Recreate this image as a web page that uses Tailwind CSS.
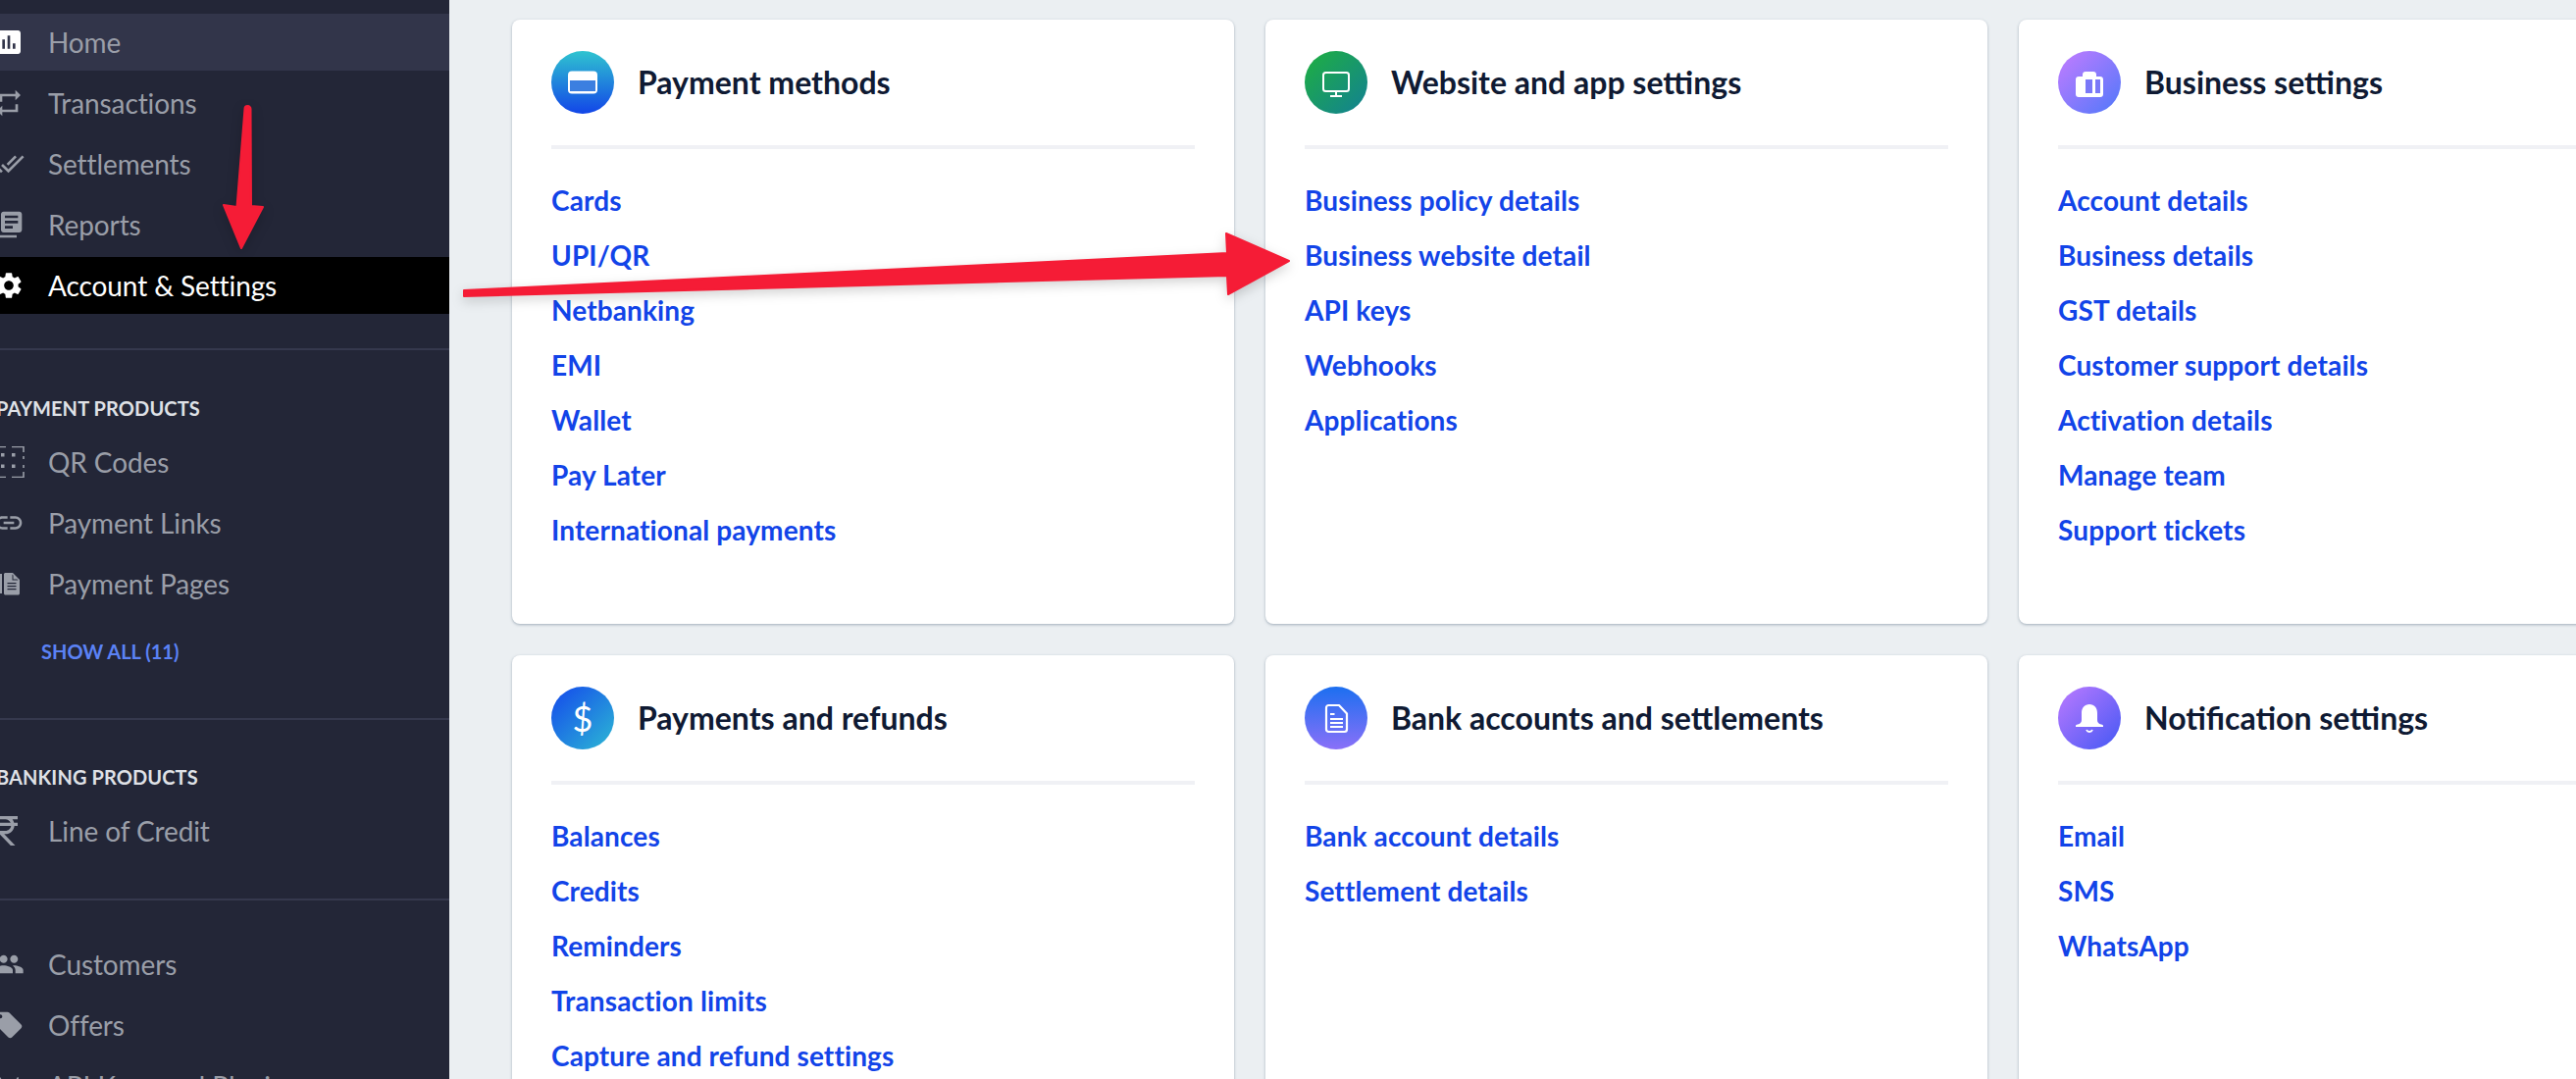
<!DOCTYPE html>
<html lang="en">
<head>
  <meta charset="UTF-8" />
  <title>Account & Settings</title>
  <script src="https://cdn.jsdelivr.net/npm/@tailwindcss/browser@4"></script>
</head>
<body class="h-[1100px] w-[2626px] overflow-hidden bg-[#ebeff2] font-['Lato',sans-serif]">
<div class="relative flex h-[1100px] w-[2626px] overflow-hidden">

  <!-- Sidebar -->
  <aside class="h-[1100px] w-[458px] shrink-0 overflow-hidden bg-[#232637] pt-[14px] text-[28px] tracking-[-0.1px] text-[#9a9ea8]">
    <nav class="flex flex-col gap-1">
      <a class="flex h-[58px] items-center bg-[#32354a]">
        <span class="w-[49px] shrink-0"><svg class="-ml-[7px] h-8 w-8 fill-white" viewBox="0 0 24 24"><path d="M19 3H5c-1.1 0-2 .9-2 2v14c0 1.1.9 2 2 2h14c1.1 0 2-.9 2-2V5c0-1.1-.9-2-2-2zM9 17H7v-7h2v7zm4 0h-2V7h2v10zm4 0h-2v-4h2v4z"/></svg></span>
        Home
      </a>
      <a class="flex h-[58px] items-center">
        <span class="w-[49px] shrink-0"><svg class="-ml-[7px] h-8 w-8 fill-[#9a9ea8]" viewBox="0 0 24 24"><path d="M7 7h10v3l4-4-4-4v3H5v6h2V7zm10 10H7v-3l-4 4 4 4v-3h12v-6h-2v4z"/></svg></span>
        Transactions
      </a>
      <a class="flex h-[58px] items-center">
        <span class="w-[49px] shrink-0"><svg class="-ml-[7px] h-8 w-8 fill-[#9a9ea8]" viewBox="0 0 24 24"><path d="M18 7l-1.41-1.41-6.34 6.34 1.41 1.41L18 7zm4.24-1.41L11.66 16.17 7.48 12l-1.41 1.41L11.66 19l12-12-1.42-1.41zM.41 13.41L6 19l1.41-1.41L1.83 12 .41 13.41z"/></svg></span>
        Settlements
      </a>
      <a class="flex h-[58px] items-center">
        <span class="w-[49px] shrink-0"><svg class="-ml-[7px] h-8 w-8 fill-[#9a9ea8]" viewBox="0 0 24 24"><path d="M4 6H2v14c0 1.1.9 2 2 2h14v-2H4V6zm16-4H8c-1.1 0-2 .9-2 2v12c0 1.1.9 2 2 2h12c1.1 0 2-.9 2-2V4c0-1.1-.9-2-2-2zm-1 9H9V9h10v2zm-4 4H9v-2h6v2zm4-8H9V5h10v2z"/></svg></span>
        Reports
      </a>
      <a class="flex h-[58px] items-center bg-black text-white">
        <span class="w-[49px] shrink-0"><svg class="-ml-[7px] h-8 w-8 fill-white" viewBox="0 0 24 24"><path d="M19.14 12.94c.04-.3.06-.61.06-.94 0-.32-.02-.64-.07-.94l2.03-1.58c.18-.14.23-.41.12-.61l-1.92-3.32c-.12-.22-.37-.29-.59-.22l-2.39.96c-.5-.38-1.03-.7-1.62-.94l-.36-2.54c-.04-.24-.24-.41-.48-.41h-3.84c-.24 0-.43.17-.47.41l-.36 2.54c-.59.24-1.13.57-1.62.94l-2.39-.96c-.22-.08-.47 0-.59.22L2.74 8.87c-.12.21-.08.47.12.61l2.03 1.58c-.05.3-.09.63-.09.94s.02.64.07.94l-2.03 1.58c-.18.14-.23.41-.12.61l1.92 3.32c.12.22.37.29.59.22l2.39-.96c.5.38 1.03.7 1.62.94l.36 2.54c.05.24.24.41.48.41h3.84c.24 0 .44-.17.47-.41l.36-2.54c.59-.24 1.13-.56 1.62-.94l2.39.96c.22.08.47 0 .59-.22l1.92-3.32c.12-.22.07-.47-.12-.61l-2.01-1.58zM12 15.6c-1.98 0-3.6-1.62-3.6-3.6s1.62-3.6 3.6-3.6 3.6 1.62 3.6 3.6-1.62 3.6-3.6 3.6z"/></svg></span>
        Account &amp; Settings
      </a>
    </nav>

    <div class="mt-[35px] h-[2px] bg-[#35384d]"></div>

    <h3 class="mt-[47px] -ml-[4px] h-6 whitespace-nowrap text-[20px] leading-6 font-bold tracking-[0.1px] text-[#dfe1e6]">PAYMENT PRODUCTS</h3>
    <nav class="mt-[14px] flex flex-col gap-1">
      <a class="flex h-[58px] items-center">
        <span class="w-[49px] shrink-0"><svg class="-ml-[7px] h-8 w-8" viewBox="0 0 32 32" fill="none"><path d="M31 6V0.5H19M31 26V31.5H19M13 0.5H0M13 31.5H0M31 10v3M31 19v3" stroke="#9a9ea8" stroke-width="1.6"/><path fill="#9a9ea8" d="M8 7h3.5v3.5H8zM19 7h3.5v3.5H19zM8 18.5h3.5v3.5H8zM19 18.5h3.5v3.5H19z"/></svg></span>
        QR Codes
      </a>
      <a class="flex h-[58px] items-center">
        <span class="w-[49px] shrink-0"><svg class="-ml-[7px] h-8 w-8 fill-[#9a9ea8]" viewBox="0 0 24 24"><path d="M3.9 12c0-1.71 1.39-3.1 3.1-3.1h4V7H7c-2.76 0-5 2.24-5 5s2.24 5 5 5h4v-1.9H7c-1.71 0-3.1-1.39-3.1-3.1zM8 13h8v-2H8v2zm9-6h-4v1.9h4c1.71 0 3.1 1.39 3.1 3.1s-1.39 3.1-3.1 3.1h-4V17h4c2.76 0 5-2.24 5-5s-2.24-5-5-5z"/></svg></span>
        Payment Links
      </a>
      <a class="flex h-[58px] items-center">
        <span class="w-[49px] shrink-0"><svg class="-ml-[7px] h-8 w-8" viewBox="0 0 32 32"><path fill="#9a9ea8" d="M7 6h2v20H7zM11 6.5c0-1 .8-1.5 1.5-1.5H20l7 7v14c0 .8-.7 1.5-1.5 1.5h-13c-.8 0-1.5-.7-1.5-1.5z"/><path fill="#232637" d="M14.5 15h9v1.3h-9zM14.5 18h9v1.3h-9zM14.5 21h9v1.3h-9zM19.5 6.5v6h6l-1-1h-4v-4z"/></svg></span>
        Payment Pages
      </a>
    </nav>
    <a class="mt-[28px] ml-[42px] block h-6 text-[20px] leading-6 font-bold tracking-normal text-[#5b82f5]">SHOW ALL (11)</a>

    <div class="mt-[56px] h-[2px] bg-[#35384d]"></div>

    <h3 class="mt-[46px] -ml-[4px] h-6 whitespace-nowrap text-[20px] leading-6 font-bold tracking-[0.1px] text-[#dfe1e6]">BANKING PRODUCTS</h3>
    <a class="mt-[14px] flex h-[58px] items-center">
      <span class="w-[49px] shrink-0"><svg class="-ml-[12px] h-10 w-10 fill-[#9a9ea8]" viewBox="0 0 24 24"><path d="M13.66 7c-.56-1.18-1.76-2-3.16-2H6V3h12v2h-3.26c.48.58.84 1.26 1.05 2H18v2h-2.02c-.25 2.8-2.61 5-5.48 5h-.73l6.73 7h-2.77L7 14v-2h3.5c1.76 0 3.22-1.3 3.46-3H6V7h7.66z"/></svg></span>
      Line of Credit
    </a>

    <div class="mt-[40px] h-[2px] bg-[#35384d]"></div>

    <nav class="mt-[36px] flex flex-col gap-1">
      <a class="flex h-[58px] items-center">
        <span class="w-[49px] shrink-0"><svg class="-ml-[7px] h-8 w-8 fill-[#9a9ea8]" viewBox="0 0 24 24"><path d="M16 11c1.66 0 2.99-1.34 2.99-3S17.66 5 16 5c-1.66 0-3 1.34-3 3s1.34 3 3 3zm-8 0c1.66 0 2.99-1.34 2.99-3S9.66 5 8 5C6.34 5 5 6.34 5 8s1.34 3 3 3zm0 2c-2.33 0-7 1.17-7 3.5V19h14v-2.5c0-2.33-4.67-3.5-7-3.5zm8 0c-.29 0-.62.02-.97.05 1.16.84 1.97 1.97 1.97 3.45V19h6v-2.5c0-2.33-4.67-3.5-7-3.5z"/></svg></span>
        Customers
      </a>
      <a class="flex h-[58px] items-center">
        <span class="w-[49px] shrink-0"><svg class="-ml-[7px] h-8 w-8 fill-[#9a9ea8]" viewBox="0 0 24 24"><path d="M21.41 11.58l-9-9C12.05 2.22 11.55 2 11 2H4c-1.1 0-2 .9-2 2v7c0 .55.22 1.05.59 1.42l9 9c.36.36.86.58 1.41.58.55 0 1.05-.22 1.41-.59l7-7c.37-.36.59-.86.59-1.41 0-.55-.23-1.06-.59-1.42zM5.5 7C4.67 7 4 6.33 4 5.5S4.67 4 5.5 4 7 4.67 7 5.5 6.33 7 5.5 7z"/></svg></span>
        Offers
      </a>
      <a class="flex h-[58px] items-center">
        <span class="w-[49px] shrink-0"><svg class="-ml-[7px] h-8 w-8 fill-[#9a9ea8]" viewBox="0 0 24 24"><path d="M17.6 9.48l1.84-3.18c.16-.31.04-.69-.26-.85-.29-.15-.65-.06-.83.22l-1.88 3.24c-2.86-1.21-6.08-1.21-8.94 0L5.65 5.67c-.19-.29-.58-.38-.87-.2-.28.18-.37.54-.22.83L6.4 9.48C3.3 11.25 1.28 14.44 1 18h22c-.28-3.56-2.3-6.75-5.4-8.52z"/></svg></span>
        API Keys and Plugins
      </a>
    </nav>
  </aside>

  <!-- Settings cards -->
  <main class="grid shrink-0 grid-cols-[repeat(3,736px)] grid-rows-[616px_616px] gap-8 pt-5 pl-16">

    <section class="rounded-lg bg-white px-10 pt-8 shadow-[0_1px_3px_rgba(100,120,140,0.55)]">
      <div class="flex items-center gap-6 border-b-4 border-[#f0f1f5] pb-8">
        <span class="flex h-16 w-16 items-center justify-center rounded-full bg-linear-to-b/srgb from-[#2fc4d0] to-[#1245e8]">
          <svg class="h-8 w-8" viewBox="0 0 32 32"><rect x="1" y="4.5" width="30" height="23" rx="4" fill="#fff"/><rect x="3" y="14" width="26" height="11" fill="#3c7fe0"/></svg>
        </span>
        <h2 class="text-[32px] font-bold text-[#0f1a33]">Payment methods</h2>
      </div>
      <ul class="mt-6 text-[28px] leading-[56px] font-bold tracking-[0.12px] text-[#1244e8]">
        <li>Cards</li><li>UPI/QR</li><li>Netbanking</li><li>EMI</li><li>Wallet</li><li>Pay Later</li><li>International payments</li>
      </ul>
    </section>

    <section class="rounded-lg bg-white px-10 pt-8 shadow-[0_1px_3px_rgba(100,120,140,0.55)]">
      <div class="flex items-center gap-6 border-b-4 border-[#f0f1f5] pb-8">
        <span class="flex h-16 w-16 items-center justify-center rounded-full bg-linear-to-br/srgb from-[#1fb03f] to-[#128094]">
          <svg class="h-8 w-8" viewBox="0 0 32 32" fill="none"><rect x="3" y="6" width="26" height="19" rx="2.5" stroke="#fff" stroke-width="2"/><path d="M16 25v5M10 30h12" stroke="#fff" stroke-width="2"/></svg>
        </span>
        <h2 class="text-[32px] font-bold text-[#0f1a33]">Website and app settings</h2>
      </div>
      <ul class="mt-6 text-[28px] leading-[56px] font-bold tracking-[0.12px] text-[#1244e8]">
        <li>Business policy details</li><li>Business website detail</li><li>API keys</li><li>Webhooks</li><li>Applications</li>
      </ul>
    </section>

    <section class="rounded-lg bg-white px-10 pt-8 shadow-[0_1px_3px_rgba(100,120,140,0.55)]">
      <div class="flex items-center gap-6 border-b-4 border-[#f0f1f5] pb-8">
        <span class="flex h-16 w-16 items-center justify-center rounded-full bg-linear-to-br/srgb from-[#c47cff] to-[#4f78fa]">
          <svg class="h-8 w-8" viewBox="0 0 32 32"><path fill="#fff" d="M9 10V8c0-1.8 1.2-3 3-3h8c1.8 0 3 1.2 3 3v2h4c1.8 0 3 1.2 3 3v15c0 1.8-1.2 3-3 3H5c-1.8 0-3-1.2-3-3V13c0-1.8 1.2-3 3-3z"/><path fill="#7a78f8" d="M12 13h7v14h-7zM22 13h5v14h-5z"/></svg>
        </span>
        <h2 class="text-[32px] font-bold text-[#0f1a33]">Business settings</h2>
      </div>
      <ul class="mt-6 text-[28px] leading-[56px] font-bold tracking-[0.12px] text-[#1244e8]">
        <li>Account details</li><li>Business details</li><li>GST details</li><li>Customer support details</li><li>Activation details</li><li>Manage team</li><li>Support tickets</li>
      </ul>
    </section>

    <section class="rounded-lg bg-white px-10 pt-8 shadow-[0_1px_3px_rgba(100,120,140,0.55)]">
      <div class="flex items-center gap-6 border-b-4 border-[#f0f1f5] pb-8">
        <span class="flex h-16 w-16 items-center justify-center rounded-full bg-linear-to-br/srgb from-[#1448ec] to-[#2cb8d4] text-[36px] leading-none text-white">$</span>
        <h2 class="text-[32px] font-bold text-[#0f1a33]">Payments and refunds</h2>
      </div>
      <ul class="mt-6 text-[28px] leading-[56px] font-bold tracking-[0.12px] text-[#1244e8]">
        <li>Balances</li><li>Credits</li><li>Reminders</li><li>Transaction limits</li><li>Capture and refund settings</li>
      </ul>
    </section>

    <section class="rounded-lg bg-white px-10 pt-8 shadow-[0_1px_3px_rgba(100,120,140,0.55)]">
      <div class="flex items-center gap-6 border-b-4 border-[#f0f1f5] pb-8">
        <span class="flex h-16 w-16 items-center justify-center rounded-full bg-linear-to-b/srgb from-[#1c6ff0] to-[#8a70f8]">
          <svg class="h-8 w-8" viewBox="0 0 32 32" fill="none"><path d="M6 5.5C6 4 7 3 8.500 3H19l8 8.500V27.500C27 29 26 30 24.500 30h-16C7 30 6 29 6 27.500z" stroke="#fff" stroke-width="2.2" stroke-linejoin="round"/><path fill="#fff" d="M10 11h4.500v2H10zM10 16h13v2H10zM10 20h13v2H10zM10 24h13v2H10z"/></svg>
        </span>
        <h2 class="text-[32px] font-bold text-[#0f1a33]">Bank accounts and settlements</h2>
      </div>
      <ul class="mt-6 text-[28px] leading-[56px] font-bold tracking-[0.12px] text-[#1244e8]">
        <li>Bank account details</li><li>Settlement details</li>
      </ul>
    </section>

    <section class="rounded-lg bg-white px-10 pt-8 shadow-[0_1px_3px_rgba(100,120,140,0.55)]">
      <div class="flex items-center gap-6 border-b-4 border-[#f0f1f5] pb-8">
        <span class="flex h-16 w-16 items-center justify-center rounded-full bg-linear-to-br/srgb from-[#bc7aff] to-[#4458f4]">
          <svg class="h-8 w-8" viewBox="0 0 32 32"><path fill="#fff" d="M16 2c-5 0-8 3.5-8 9v7c0 2.500-1.500 4-4 4.500-1.300.3-2 .6-2 1.500v1h28v-1c0-.9-.7-1.200-2-1.500-2.500-.5-4-2-4-4.500v-7c0-5.500-3-9-8-9z"/><path d="M13 28c.5 1.300 1.500 2 3 2s2.500-.7 3-2" fill="none" stroke="#fff" stroke-width="1.8"/></svg>
        </span>
        <h2 class="text-[32px] font-bold text-[#0f1a33]">Notification settings</h2>
      </div>
      <ul class="mt-6 text-[28px] leading-[56px] font-bold tracking-[0.12px] text-[#1244e8]">
        <li>Email</li><li>SMS</li><li>WhatsApp</li>
      </ul>
    </section>
  </main>

  <!-- Annotation arrows drawn over the page -->
  <svg class="pointer-events-none absolute top-0 left-0 drop-shadow-[0_4px_6px_rgba(0,0,0,0.18)]" width="2626" height="1100" viewBox="0 0 2626 1100">
    <path d="M249.5 111 a3 3 0 0 1 6 0 L256 210 L268 211 L246 253 L228 209 L241.5 211 Z" fill="#f51c36" stroke="#f51c36" stroke-width="2" stroke-linejoin="round"/>
    <path d="M473 296 L1251 258 L1250 238 L1314 266 L1252 300 L1251 281 L473 302 Z" fill="#f51c36" stroke="#f51c36" stroke-width="2" stroke-linejoin="round"/>
  </svg>
</div>
</body>
</html>
